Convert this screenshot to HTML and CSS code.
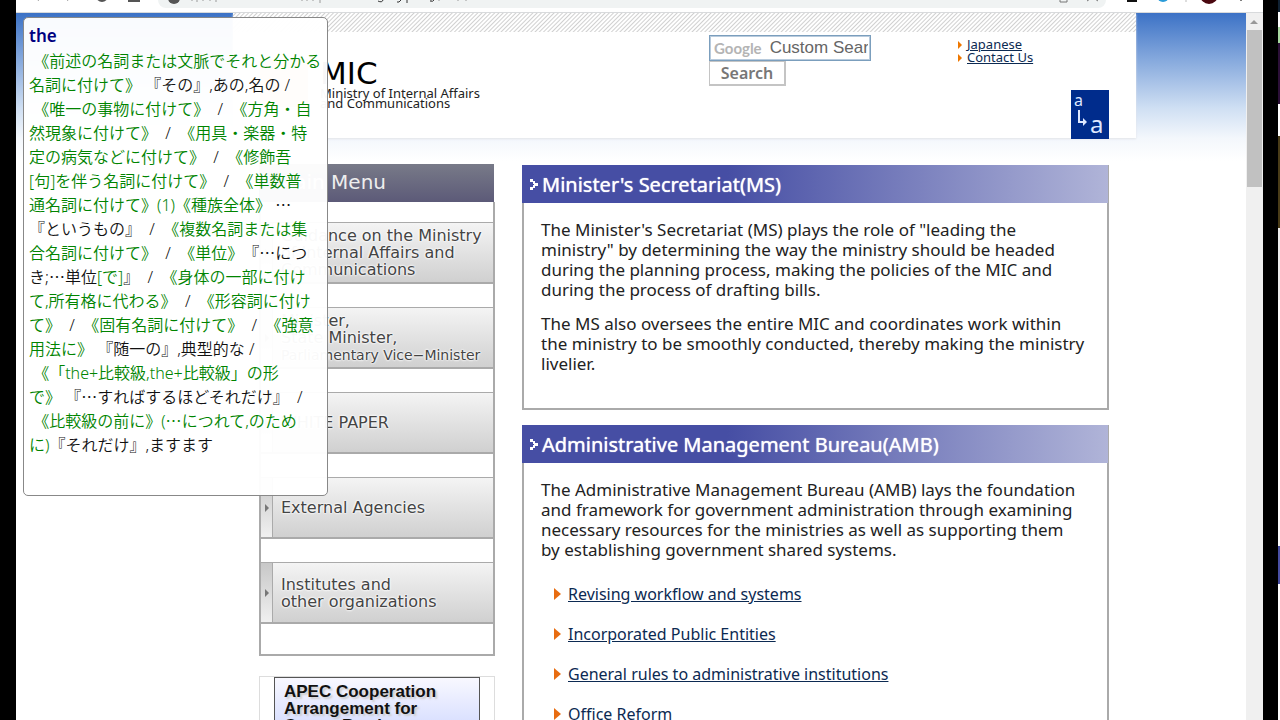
FILE: index.html
```html
<!DOCTYPE html>
<html lang="en">
<head>
<meta charset="utf-8">
<title>MIC</title>
<link rel="stylesheet" href="styles.css">
</head>
<body>
<div class="screen">
  <div class="window">
    <div class="toolbar">
      <svg class="nav-icons" width="130" height="12" viewBox="0 0 130 12" fill="none" stroke="#555" stroke-width="2"><path d="M21 -2l2 2M53 -2l-2 2M81 -4a5 5 0 0 0 10 0M113 -3v4h10v-4"/></svg>
      <div class="address">
        <svg width="320" height="8" viewBox="0 0 320 8" fill="none" stroke="#333"><circle cx="7" cy="-2" r="6" fill="#555" stroke="none"/><path stroke="#999" d="M25 0v1M30 0v2M36 0v1M43 0v1M49 0v2M135 0v1M140 0v1M146 0v1M153 0v3M264 0v1M272 0v1M291 0v1M299 0v1"/><path d="M211 1q4 2 5-1M230 2h2l2-2M240 0v3M263 1q3 1 4-1"/></svg>
      </div>
      <svg class="ext-icons" width="140" height="12" viewBox="0 0 140 12"><path d="M-46 0v2h7v-2M-19 1l3-2M-8 1l-3-2" fill="none" stroke="#777"/><path d="M21 0h10v2h-10z" fill="#111"/><circle cx="57" cy="-4" r="6" fill="#2a9bd8"/><path d="M80 0v2" stroke="#bbb"/><circle cx="103" cy="-5" r="9" fill="#4a0810"/><circle cx="135" cy="0" r="1" fill="#555"/></svg>
    </div>
    <div class="viewport">
      <div class="page">
        <header class="header">
          <div class="stripes"></div>
          <div class="masthead">
            <div class="brand">
              <div class="mark"></div>
              <div class="name">
                <strong class="mic">MIC</strong>
                <span>Ministry of Internal Affairs<br>and Communications</span>
              </div>
            </div>
            <form class="search">
              <div class="box"><label class="google" for="q">Google</label><input id="q" type="text" placeholder="Custom Search"></div>
              <button type="button">Search</button>
            </form>
            <div class="tools">
              <ul class="links">
                <li><a href="#">Japanese</a></li>
                <li><a href="#">Contact Us</a></li>
              </ul>
              <button class="resize" type="button" aria-label="Text size"><span class="small-a">a</span>
                <svg width="16" height="20" viewBox="0 0 16 20" fill="#dfe8ff"><path d="M4 0h2v11h3V8l4 4-4 4v-3H4z"/></svg>
                <span class="large-a">a</span></button>
            </div>
          </div>
        </header>
        <div class="columns">
          <aside class="sidebar">
            <h2 class="menu-title">Main Menu</h2>
            <nav class="menu">
              <a href="#"><span>Guidance on the Ministry<br>of Internal Affairs and<br>Communications</span></a>
              <a href="#"><span>Minister,<br>State Minister,<br><small>Parliamentary Vice−Minister</small></span></a>
              <a href="#"><span>WHITE PAPER</span></a>
              <a href="#"><span>External Agencies</span></a>
              <a href="#"><span>Institutes and<br>other organizations</span></a>
            </nav>
            <div class="banner-frame"><a class="banner" href="#">APEC Cooperation<br>Arrangement for<br>Cross−Border</a></div>
          </aside>
          <main class="main">
            <section class="card ms">
              <h2><svg width="8" height="11" viewBox="0 0 8 11" fill="#fff"><path d="M0 0h3v3H0zM4 4h4v3H4zM0 8h3v3H0zM3 2h2v3H3zM3 6h2v3H3z"/></svg>Minister's Secretariat(MS)</h2>
              <div class="text">
                <p>The Minister's Secretariat (MS) plays the role of "leading the<br>ministry" by determining the way the ministry should be headed<br>during the planning process, making the policies of the MIC and<br>during the process of drafting bills.</p>
                <p>The MS also oversees the entire MIC and coordinates work within<br>the ministry to be smoothly conducted, thereby making the ministry<br>livelier.</p>
              </div>
            </section>
            <section class="card">
              <h2><svg width="8" height="11" viewBox="0 0 8 11" fill="#fff"><path d="M0 0h3v3H0zM4 4h4v3H4zM0 8h3v3H0zM3 2h2v3H3zM3 6h2v3H3z"/></svg>Administrative Management Bureau(AMB)</h2>
              <div class="text">
                <p>The Administrative Management Bureau (AMB) lays the foundation<br>and framework for government administration through examining<br>necessary resources for the ministries as well as supporting them<br>by establishing government shared systems.</p>
                <ul class="list">
                  <li><a href="#">Revising workflow and systems</a></li>
                  <li><a href="#">Incorporated Public Entities</a></li>
                  <li><a href="#">General rules to administrative institutions</a></li>
                  <li><a href="#">Office Reform</a></li>
                </ul>
              </div>
            </section>
          </main>
        </div>
      </div>
      <div class="scrollbar"><svg width="17" height="17" viewBox="0 0 17 17"><path d="M4 11l4-4 4 4z" fill="#999"/></svg><div class="thumb"></div></div>
    </div>
  </div>
  <div class="edge"></div>
  <div class="behind"></div>
  <div class="popup" lang="ja">
    <strong>the</strong>
    <p><i>&nbsp;《前述の名詞または文脈でそれと分かる</i><br><i>名詞に付けて》</i>&nbsp;『その』,あの,名の /<br><i>&nbsp;《唯一の事物に付けて》</i>&nbsp; / <i>&nbsp;《方角・自</i><br><i>然現象に付けて》</i>&nbsp; / <i>&nbsp;《用具・楽器・特</i><br><i>定の病気などに付けて》</i>&nbsp; / <i>&nbsp;《修飾吾</i><br><i>[句]を伴う名詞に付けて》</i>&nbsp; / <i>&nbsp;《単数普</i><br><i>通名詞に付けて》(1)《種族全体》</i>&nbsp;<b>…</b><br>『というもの』&nbsp; / <i>&nbsp;《複数名詞または集</i><br><i>合名詞に付けて》</i>&nbsp; / <i>&nbsp;《単位》</i>『<b>…</b>につ<br>き;<b>…</b>単位<i>[で]</i>』&nbsp; / <i>&nbsp;《身体の一部に付け</i><br><i>て,所有格に代わる》</i>&nbsp; / <i>&nbsp;《形容詞に付け</i><br><i>て》</i>&nbsp; / <i>&nbsp;《固有名詞に付けて》</i>&nbsp; / <i>&nbsp;《強意</i><br><i>用法に》</i>&nbsp;『随一の』,典型的な /<br><i>&nbsp;《「the+比較級,the+比較級」の形</i><br><i>で》</i>&nbsp;『<b>…</b>すればするほどそれだけ』&nbsp; /<br><i>&nbsp;《比較級の前に》(<b>…</b>につれて,のため</i><br><i>に)</i>『それだけ』,ますます</p>
  </div>
</div>
</body>
</html>
```
FILE: styles.css
```css
* { box-sizing: border-box; }
body { margin: 0; background: #000; font-family: "Noto Sans", "Noto Sans CJK JP", sans-serif; color: #222; }
ul, p, h2 { margin: 0; padding: 0; }
ul { list-style: none; }
a { color: #0c2a52; }

.screen { position: relative; display: flex; height: 100vh; overflow: hidden; padding-left: 16px; background: #000; }
.window { flex: 1; min-width: 0; display: flex; flex-direction: column; background: #fff; }
.edge { width: 15px; background: #000; }
.behind { width: 2px; background: linear-gradient(#123 0 12px, #fff 12px 27px, #a8d8a0 27px 43px, #2c1038 43px 104px, #fff 104px 136px, #4a3c18 136px 228px, #eee 228px 300px, #fff 300px 546px, #4a50a4 546px 584px, #fff 584px); }

.toolbar { display: flex; height: 13px; border-bottom: 1px solid #d8dadc; background: #fff; }
.nav-icons { flex: none; }
.address { flex: 1; min-width: 0; height: 8px; margin-left: 12px; padding-left: 9px; border-radius: 0 0 14px 14px; background: #f0f3f3; }
.address svg { display: block; }
.ext-icons { flex: none; overflow: visible; margin-right: 17px; }

.viewport { flex: 1; min-height: 0; display: flex; }
.page { flex: 1; overflow: hidden; padding: 0 110px 0 217px; background: #fff linear-gradient(#3c72c6, #83a7dc 45px, #cfdff3 95px, #f3f7fc 125px, #fff 148px) 0 0 / 100% 148px no-repeat; }
.scrollbar { width: 17px; background: #f0f0f0; }
.scrollbar svg { display: block; }
.thumb { height: 157px; margin: 0 1px; background: #c1c1c1; }

.header { height: 125px; background: #fff; box-shadow: 0 1px 2px #e2e4e8; }
.stripes { height: 19px; background: repeating-linear-gradient(135deg, #fff 0 1px, #d0d0d0 2px, #fff 3px); }
.masthead { display: grid; grid-template-columns: 476px 249px 1fr; }
.brand { display: flex; gap: 12px; padding: 27px 0 0 27px; }
.mark { width: 48px; height: 48px; background: #f6b48c; }
.name { font-size: 13px; line-height: 10px; color: #222; }
.mic { display: block; margin-bottom: 1px; color: #000; font: 31px/28px "DejaVu Sans", sans-serif; }
.search { padding-top: 3px; }
.box { display: flex; align-items: center; width: 162px; height: 26px; padding: 0 2px 0 4px; border: 1px solid #7b9ebd; outline: 1px solid #b8cbdd; outline-offset: -2px; background: #fff; }
.google { color: #b4b4b4; font: bold 15px Lato, sans-serif; }
.box input { flex: 1; min-width: 0; padding: 0 0 0 8px; border: 0; outline: none; background: none; font: 17px "Liberation Sans", sans-serif; }
.box input::placeholder { color: #666; }
.search button { display: block; width: 77px; height: 25px; padding: 0; border: 1px solid #c4c4c4; border-width: 1px 2px 2px 1px; background: #fff; color: #777; font: 600 16px "Noto Sans", sans-serif; }
.tools { padding-top: 6px; }
.links li { display: flex; align-items: center; gap: 5px; font-size: 13px; line-height: 13px; }
.links li::before { content: ""; border: 4px solid transparent; border-left: 4px solid #e70; border-right: 0; }
.resize { display: grid; grid-template: 20px 1fr / 16px 1fr; width: 38px; height: 49px; margin: 26px 0 0 113px; padding: 0 3px; border: 0; background: #002c8c; color: #dfe8ff; font-family: "Noto Sans", sans-serif; text-align: left; }
.small-a { grid-column: 1 / 3; font-size: 16px; line-height: 20px; }
.large-a { font-size: 24px; line-height: 28px; }

.columns { display: grid; grid-template-columns: 236px 1fr; gap: 27px; padding: 26px 27px 0 26px; }
.menu-title { height: 38px; margin-right: 1px; padding-left: 18px; background: linear-gradient(#787a88, #5c5a78); color: #eee; font: 20px/37px "DejaVu Sans", sans-serif; }
.menu { display: grid; grid-auto-rows: 62px; gap: 23px; padding: 20px 0 30px; border: 2px solid #aaa; border-top: 0; }
.menu a { position: relative; display: grid; grid-template-columns: 12px 1fr; align-items: center; border: 1px solid #aaa; border-width: 1px 0 2px; background: linear-gradient(#f4f4f4, #d0d0d0); color: #444; font: 16px/17px "DejaVu Sans", sans-serif; text-decoration: none; white-space: nowrap; }
.menu a::before { content: ""; align-self: stretch; border-right: 1px solid #aaa; background: linear-gradient(#c8c8c8, #f0f0f0); }
.menu a::after { content: ""; position: absolute; left: 4px; top: calc(50% - 4px); border: 4px solid transparent; border-left-color: #777; border-right: 0; }
.menu span { padding-left: 8px; text-shadow: 0 0 2px #fff, 0 0 2px #fff, 0 0 3px #fff; }
.menu small { font-size: 14px; }
.banner-frame { height: 70px; margin-top: 20px; padding: 0 14px; border: 1px solid #ddd; }
.banner { display: block; height: 70px; padding: 5px 9px; border: 1px solid #555; background: linear-gradient(#f8f8ff, #c8d2ff 70px); color: #111; font: bold 17px/17px "Liberation Sans", sans-serif; text-decoration: none; text-shadow: 2px 2px 2px #ccc; white-space: nowrap; }

.main { display: grid; gap: 15px; align-content: start; padding-top: 1px; }
.card { border: 2px solid #aaa; border-top: 0; }
.ms { height: 245px; }
.card h2 { display: flex; align-items: center; gap: 4px; height: 38px; margin: 0 -1px 0 -2px; padding-left: 8px; background: linear-gradient(90deg, #464ea4 35%, #b0b4d8); color: #fff; font: 20px "Noto Sans", sans-serif; text-shadow: 0 0 1px #fff; }
.text { padding: 17px; font-size: 17px; line-height: 20px; white-space: nowrap; }
.text p + p { margin-top: 14px; }
.list { display: grid; gap: 20px; padding: 24px 0 0 13px; font-size: 16px; }
.list li { display: flex; align-items: center; gap: 7px; }
.list li::before { content: ""; border: 6px solid transparent; border-left: 7px solid #e86c10; border-right: 0; }

.popup { position: absolute; left: 23px; top: 17px; width: 305px; height: 479px; padding: 6px 0 0 5px; border: 1px solid #888; border-radius: 5px; background: rgba(255, 255, 255, .97); color: #111; font: 16px/24px "Noto Sans", "Noto Sans CJK JP", sans-serif; white-space: nowrap; text-spacing-trim: space-all; }
.popup strong { display: block; color: #000080; font-size: 17px; font-weight: 600; }
.popup p { margin-top: 1px; font-weight: 350; }
.popup i { font-style: normal; color: #008400; }
.popup b { font-family: "Noto Sans CJK JP", sans-serif; font-weight: 350; line-height: 16px; }
```
